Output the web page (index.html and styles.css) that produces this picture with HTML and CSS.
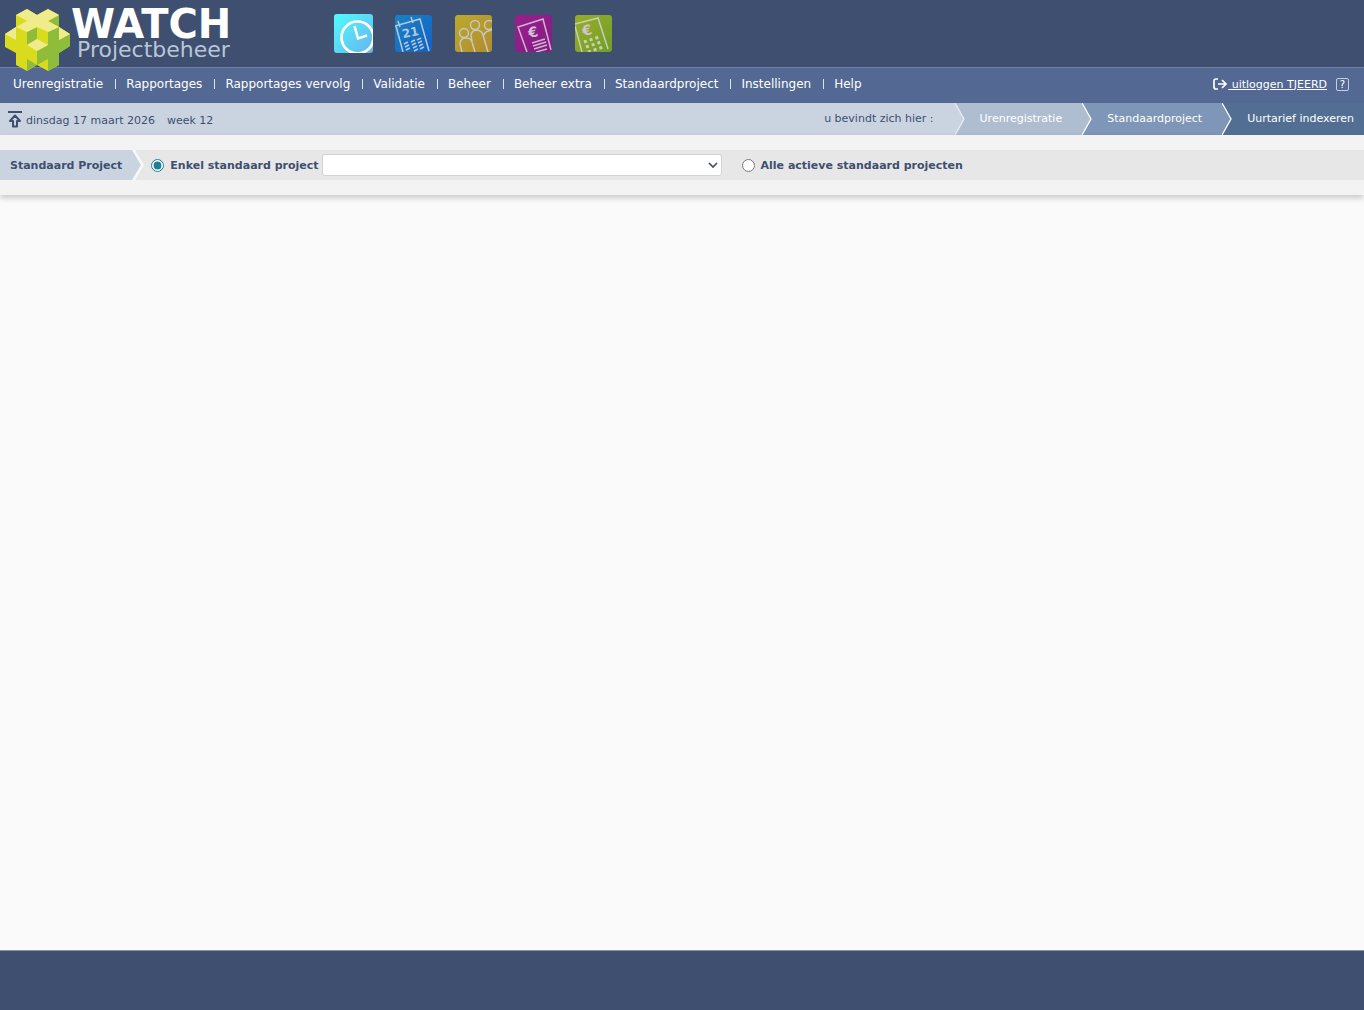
FILE: index.html
```html
<!DOCTYPE html>
<html lang="nl">
<head>
  <meta charset="UTF-8" />
  <meta name="viewport" content="width=device-width, initial-scale=1.0"/>
  <title>WATCH Projectbeheer - Uurtarief indexeren</title>
  <link rel="stylesheet" href="styles.css">
</head>
<body>
  <header class="top">
    <a class="logo" href="#">
      <svg class="cube" width="66" height="64" viewBox="0 0 66 64" aria-hidden="true">
        <path fill="#d8dc1c" d="M22 1 32 7 43 1 54 7V19L65 26V38L54 45V57L43 63 32 57 22 63 11 57V45L0 39V26L11 19V7Z"/>
        <path fill="#8fbc3a" d="M54 7 43 13 54 19ZM22 24 32 19V31L22 37ZM43 24 54 19V32L65 26V38L54 45V57L43 63ZM43 37 32 43V57L43 51ZM22 51 32 57 22 63Z"/>
        <path fill="#f0ec8c" d="M22 1 32 7 43 1 54 7 43 13 54 19 43 24 32 19 22 24 11 19 22 13 11 7ZM11 19V32L0 26ZM54 19V32L65 26ZM32 31 43 37 32 43 22 37Z"/>
      </svg>
      <span class="brand">
        <span class="name">WATCH</span>
        <span class="sub">Projectbeheer</span>
      </span>
    </a>
    <nav class="modules" aria-label="Modules">
      <a class="active" href="#" title="Uren">
        <svg width="39" height="39" viewBox="0 0 39 39">
          <defs>
            <linearGradient id="gClock" x2="1" y2="1"><stop stop-color="#52fbff"/><stop offset="1" stop-color="#66b3ec"/></linearGradient>
            <clipPath id="cClock"><rect width="39" height="39" rx="3"/></clipPath>
          </defs>
          <g clip-path="url(#cClock)">
            <rect width="39" height="39" fill="url(#gClock)"/>
            <circle cx="23.500" cy="23.500" r="16" fill="none" stroke="#fff" stroke-width="2.700"/>
            <path d="M20.500 12 24 24.500 33 21.500" fill="none" stroke="#fff" stroke-width="2.500"/>
          </g>
        </svg>
      </a>
      <a href="#" title="Kalender">
        <svg width="37" height="37" viewBox="0 0 37 37">
          <defs>
            <linearGradient id="gCal" x2="1" y2="1"><stop stop-color="#1983c2"/><stop offset="1" stop-color="#1460c5"/></linearGradient>
            <clipPath id="cIcon"><rect width="37" height="37" rx="3"/></clipPath>
          </defs>
          <g clip-path="url(#cIcon)" stroke="#b4c8dc" stroke-width="1.500" fill="none">
            <rect width="37" height="37" fill="url(#gCal)" stroke="none"/>
            <path d="M0 11 25 4 34 36M1 11 8 37M3 6 5 12M16 2 18 8"/>
            <path d="M9 29 13 27M10 32 14 30M11 35 15 33M16 27 20 25M17 30 21 28M18 33 22 31M19 36 23 34M22 25 26 23M23 28 27 26M24 31 28 29M25 34 29 32"/>
            <text class="glyph" x="7" y="22" transform="rotate(-12 13 18)">21</text>
          </g>
        </svg>
      </a>
      <a href="#" title="Medewerkers">
        <svg width="37" height="37" viewBox="0 0 37 37">
          <defs><linearGradient id="gTeam" x2="1" y2="1"><stop stop-color="#bbaa2d"/><stop offset="1" stop-color="#b18b30"/></linearGradient></defs>
          <g clip-path="url(#cIcon)" stroke="#c8c8bc" stroke-width="1.500" fill="none">
            <rect width="37" height="37" fill="url(#gTeam)" stroke="none"/>
            <circle cx="9" cy="18" r="4.500"/><circle cx="20" cy="10" r="4.500"/><circle cx="34" cy="10" r="4.500"/>
            <path d="M7 37 5 29Q5 23 11 23Q16 23 17 27L20 37M17 26 16 20Q17 15 22 15Q27 16 28 20L33 37M29 20Q30 16 37 15"/>
          </g>
        </svg>
      </a>
      <a href="#" title="Facturen">
        <svg width="37" height="37" viewBox="0 0 37 37">
          <defs><linearGradient id="gInv" x2="1" y2="1"><stop stop-color="#9b1e8d"/><stop offset="1" stop-color="#841c83"/></linearGradient></defs>
          <g clip-path="url(#cIcon)" stroke="#cbb6d0" stroke-width="1.500" fill="none">
            <rect width="37" height="37" fill="url(#gInv)" stroke="none"/>
            <path d="M12 37 3 12 28 4 36 35M17 28 30 24M18 31 31 27M19 34 32 30M21 37 32 34"/>
            <text class="glyph euro" x="13" y="22" transform="rotate(-12 18 17)">€</text>
          </g>
        </svg>
      </a>
      <a href="#" title="Calculatie">
        <svg width="37" height="37" viewBox="0 0 37 37">
          <defs><linearGradient id="gCalc" x2="1" y2="1"><stop stop-color="#99ad25"/><stop offset="1" stop-color="#739d2c"/></linearGradient></defs>
          <g clip-path="url(#cIcon)" stroke="#c3d1b4" stroke-width="1.500" fill="none">
            <rect width="37" height="37" fill="url(#gCalc)" stroke="none"/>
            <path d="M0 9 23 3 33 34M0 11 7 37"/>
            <path stroke-width="3" stroke-dasharray="3 3" d="M9 27 24 22M11 32 26 27M13 37 28 32"/>
            <text class="glyph euro" x="7" y="20" transform="rotate(-12 12 15)">€</text>
          </g>
        </svg>
      </a>
    </nav>
  </header>

  <div class="menubar">
    <nav class="menu" aria-label="Hoofdmenu">
      <a href="#">Urenregistratie</a>
      <a href="#">Rapportages</a>
      <a href="#">Rapportages vervolg</a>
      <a href="#">Validatie</a>
      <a href="#">Beheer</a>
      <a href="#">Beheer extra</a>
      <a href="#">Standaardproject</a>
      <a href="#">Instellingen</a>
      <a href="#">Help</a>
    </nav>
    <div class="user">
      <svg width="15" height="12" viewBox="0 0 15 12" fill="none" stroke="#fff" stroke-width="1.700" aria-hidden="true"><path d="M5 1H3Q1 1 1 3V9Q1 11 3 11H5M5 6H13M9 2 13 6 9 10"/></svg>
      <a class="logout" href="#">&nbsp;uitloggen TJEERD</a>
      <a class="help" href="#" title="Help">?</a>
    </div>
  </div>

  <div class="infobar">
    <div class="date">
      <svg width="14" height="17" viewBox="0 0 14 17" fill="none" stroke="#3e4f6f" stroke-width="2" aria-hidden="true"><path d="M0 1H14"/><path stroke-linejoin="round" d="M7 4.500 2 10H5V15.500H9V10H12Z"/></svg>
      <span>dinsdag 17 maart 2026</span>
      <span class="week">week 12</span>
    </div>
    <nav class="crumbs" aria-label="Kruimelpad">
      <span class="here">u bevindt zich hier :</span>
      <svg class="arrow a1" width="10" height="32" viewBox="0 0 10 32"><path class="fill" d="M0 0 9 16 0 32Z"/><path class="line" d="M0 0 9 16 0 32"/></svg>
      <a class="c1" href="#">Urenregistratie</a>
      <svg class="arrow a2" width="10" height="32" viewBox="0 0 10 32"><path class="fill" d="M0 0 9 16 0 32Z"/><path class="line" d="M0 0 9 16 0 32"/></svg>
      <a class="c2" href="#">Standaardproject</a>
      <svg class="arrow a3" width="10" height="32" viewBox="0 0 10 32"><path class="fill" d="M0 0 9 16 0 32Z"/><path class="line" d="M0 0 9 16 0 32"/></svg>
      <a class="c3" href="#">Uurtarief indexeren</a>
    </nav>
  </div>

  <form class="filter">
    <div class="row">
      <span class="caption">Standaard Project</span>
      <svg class="tip" width="12" height="30" viewBox="0 0 12 30" aria-hidden="true"><path fill="#f8f8f8" d="M0 0H3L12 15 3 30H0Z"/><path fill="#cad4e1" d="M0 0 9 15 0 30Z"/></svg>
      <input type="radio" name="keuze" id="enkel" checked>
      <label for="enkel">Enkel standaard project</label>
      <select aria-label="Standaard project"><option></option></select>
      <input class="second" type="radio" name="keuze" id="alle">
      <label for="alle">Alle actieve standaard projecten</label>
    </div>
  </form>

  <main></main>
  <footer></footer>
</body>
</html>
```
FILE: styles.css
```css
*{box-sizing:border-box;}
body{margin:0;min-height:100vh;display:flex;flex-direction:column;background:#fafafa;color:#3e4f6f;font-family:Verdana,"DejaVu Sans",sans-serif;font-size:11px;}
a{color:inherit;text-decoration:none;}
svg{display:block;flex:none;}

/* header */
.top{height:67px;display:flex;background:#3e4f6f;}
.logo{display:flex;width:334px;padding:8px 0 0 5px;}
.cube{position:relative;z-index:1;}
.brand{display:flex;flex-direction:column;}
.name{color:#fff;font-size:40px;font-weight:bold;line-height:32px;}
.sub{color:#b9c6d8;font-size:22px;line-height:20px;padding-left:6px;}
.modules{display:flex;align-items:center;gap:23px;}
.modules .active{margin-right:-1px;}
.glyph{font-size:12px;font-weight:bold;fill:#b4c8dc;stroke:none;}
.euro{font-size:14px;fill:#d0c4d2;}

/* menu */
.menubar{height:36px;display:flex;justify-content:space-between;background:#536994;border-top:1px solid #7183a8;color:#fff;}
.menu{display:flex;align-items:flex-start;padding:8px 0 0 13px;font-size:12px;line-height:16px;}
.menu a{display:flex;align-items:center;}
.menu a + a::before{content:"";width:1px;height:10px;margin:0 10px 0 12px;background:#dfe5ee;}
.user{display:flex;align-items:center;padding:0 15px 3px 0;}
.logout{text-decoration:underline;}
.help{width:13px;height:13px;margin-left:9px;border:1px solid #c5cfdf;border-radius:2px;font-size:10px;line-height:11px;text-align:center;}

/* date and breadcrumb */
.infobar{height:32px;display:flex;justify-content:space-between;background:#cad4e1;}
.date{display:flex;align-items:center;padding-left:8px;}
.date span{margin:2px 0 0 4px;}
.date .week{margin-left:12px;}
.crumbs{display:flex;line-height:31px;}
.here{padding-right:21px;}
.crumbs a{padding:0 20px 0 15px;color:#fff;}
.crumbs .c1{background:#afbdd1;}
.crumbs .c2{background:#7e96b7;}
.crumbs .c3{background:#526f93;padding-right:10px;}
.arrow .line{fill:none;stroke:#fff;stroke-width:1.3;}
.a1{background:#afbdd1;}
.a1 .fill{fill:#cad4e1;}
.a1 .line{stroke:#e8edf3;}
.a2{background:#7e96b7;}
.a2 .fill{fill:#afbdd1;}
.a3{background:#526f93;}
.a3 .fill{fill:#7e96b7;}

/* filter */
.filter{padding:15px 0;background:#f3f3f3;box-shadow:0 3px 6px rgba(0,0,0,.2);}
.row{height:30px;display:flex;align-items:center;background:#e7e7e7;font-weight:bold;}
.caption{align-self:stretch;padding:0 10px;line-height:31px;background:#cad4e1;}
.row input{width:13px;height:13px;margin:0 6px 0 7px;accent-color:#1f7f90;}
.row select{width:400px;height:22px;margin-left:3px;padding:0 4px;appearance:none;border:1px solid #d3d3d3;border-radius:3px;color:#3e4f6f;
  background:#fff url("data:image/svg+xml,%3Csvg xmlns='http://www.w3.org/2000/svg' width='10' height='6' fill='none' stroke='%233e4f6f' stroke-width='1.7'%3E%3Cpath d='M1 1 5 5 9 1'/%3E%3C/svg%3E") no-repeat right 3px center;}
.row .second{margin-left:20px;}

main{flex:1;}
footer{height:60px;background:#3e4f6f;border-top:1px solid #8892a8;}
```
